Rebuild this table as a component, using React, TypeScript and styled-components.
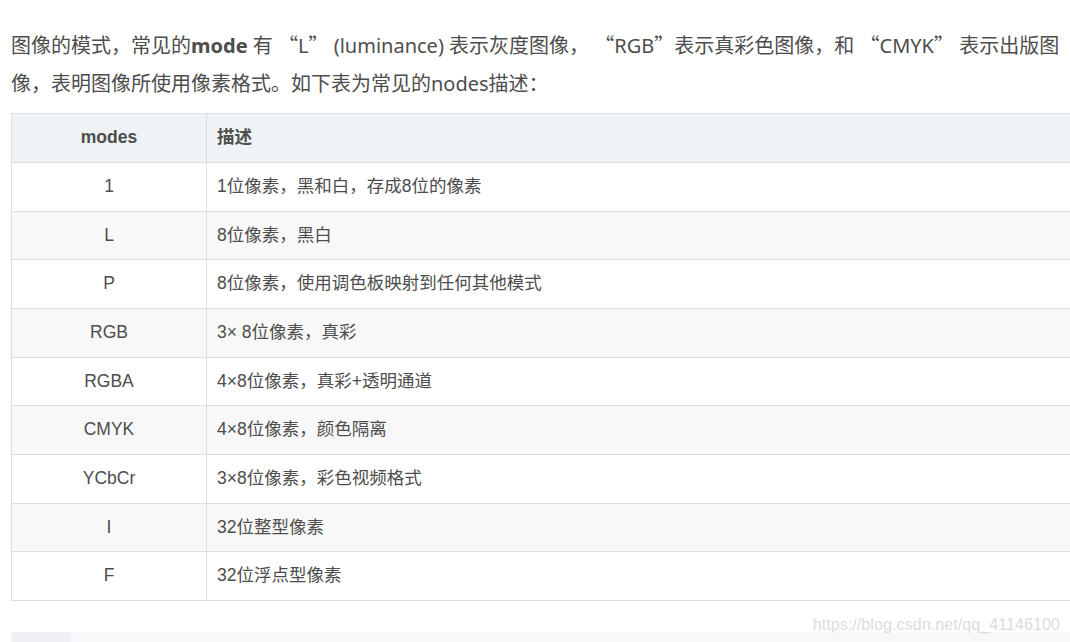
import React from "react";
import styled, { createGlobalStyle } from "styled-components";

const Global = createGlobalStyle`
  html, body { margin: 0; padding: 0; background: #fff; overflow: hidden; }
  body { width: 1070px; height: 642px; }
`;

const Page = styled.div`
  position: relative;
  width: 1070px;
  height: 642px;
  overflow: hidden;
`;

const Article = styled.div`
  width: 1064px;
  padding: 26px 0 0 11px;
  display: flex;
  flex-direction: column;
  color: #4d4d4d;
`;

const Para = styled.p`
  margin: 0 0 11px;
  font-family: "Noto Sans", "Noto Sans CJK SC", sans-serif;
  font-size: 20px;
  line-height: 37.5px;
  color: #4d4d4d;
  b { font-weight: 700; }
`;

const Quote = styled.span`
  font-family: "Noto Sans CJK SC", sans-serif;
`;

const Table = styled.table`
  width: 1080px;
  border-collapse: collapse;
  font-family: "Liberation Sans", "Noto Sans CJK SC", sans-serif;
  font-size: 17.5px;
  color: #4d4d4d;
`;

const Th = styled.th<{ $center?: boolean }>`
  background: #eff3f5;
  border: 1px solid #dddddd;
  padding: 8px 10px;
  line-height: 31.8px;
  font-weight: 700;
  text-align: ${(p) => (p.$center ? "center" : "left")};
`;

const Tr = styled.tr`
  &:nth-child(even) { background: #f8f8f8; }
`;

const Td = styled.td<{ $center?: boolean }>`
  border: 1px solid #dddddd;
  padding: 8px 10px;
  line-height: 31.7px;
  text-align: ${(p) => (p.$center ? "center" : "left")};
`;

const ModeCol = styled.col`
  width: 195px;
`;

const CodeBlock = styled.div`
  margin-top: 31px;
  height: 40px;
  display: flex;
  background: #f6f8fa;
`;

const Gutter = styled.div`
  width: 60px;
  background: #eef0f4;
`;

const Watermark = styled.div`
  position: absolute;
  right: 10px;
  top: 615px;
  font-family: "Liberation Sans", sans-serif;
  font-size: 16.2px;
  color: #dcdcdc;
  white-space: nowrap;
`;

const rows: [string, string][] = [
  ["1", "1位像素，黑和白，存成8位的像素"],
  ["L", "8位像素，黑白"],
  ["P", "8位像素，使用调色板映射到任何其他模式"],
  ["RGB", "3× 8位像素，真彩"],
  ["RGBA", "4×8位像素，真彩+透明通道"],
  ["CMYK", "4×8位像素，颜色隔离"],
  ["YCbCr", "3×8位像素，彩色视频格式"],
  ["I", "32位整型像素"],
  ["F", "32位浮点型像素"],
];

export default function App() {
  return (
    <Page>
      <Global />
      <Article>
        <Para lang="zh-CN">
          图像的模式，常见的<b>mode</b> 有 <Quote>“</Quote>L<Quote>”</Quote> (luminance) 表示灰度图像，{" "}
          <Quote>“</Quote>RGB<Quote>”</Quote>表示真彩色图像，和 <Quote>“</Quote>CMYK<Quote>”</Quote>{" "}
          表示出版图像，表明图像所使用像素格式。如下表为常见的nodes描述：
        </Para>
        <Table>
          <colgroup>
            <ModeCol />
            <col />
          </colgroup>
          <thead>
            <tr>
              <Th $center>modes</Th>
              <Th>描述</Th>
            </tr>
          </thead>
          <tbody>
            {rows.map(([m, d]) => (
              <Tr key={m}>
                <Td $center>{m}</Td>
                <Td>{d}</Td>
              </Tr>
            ))}
          </tbody>
        </Table>
        <CodeBlock>
          <Gutter />
        </CodeBlock>
      </Article>
      <Watermark>https://blog.csdn.net/qq_41146100</Watermark>
    </Page>
  );
}
